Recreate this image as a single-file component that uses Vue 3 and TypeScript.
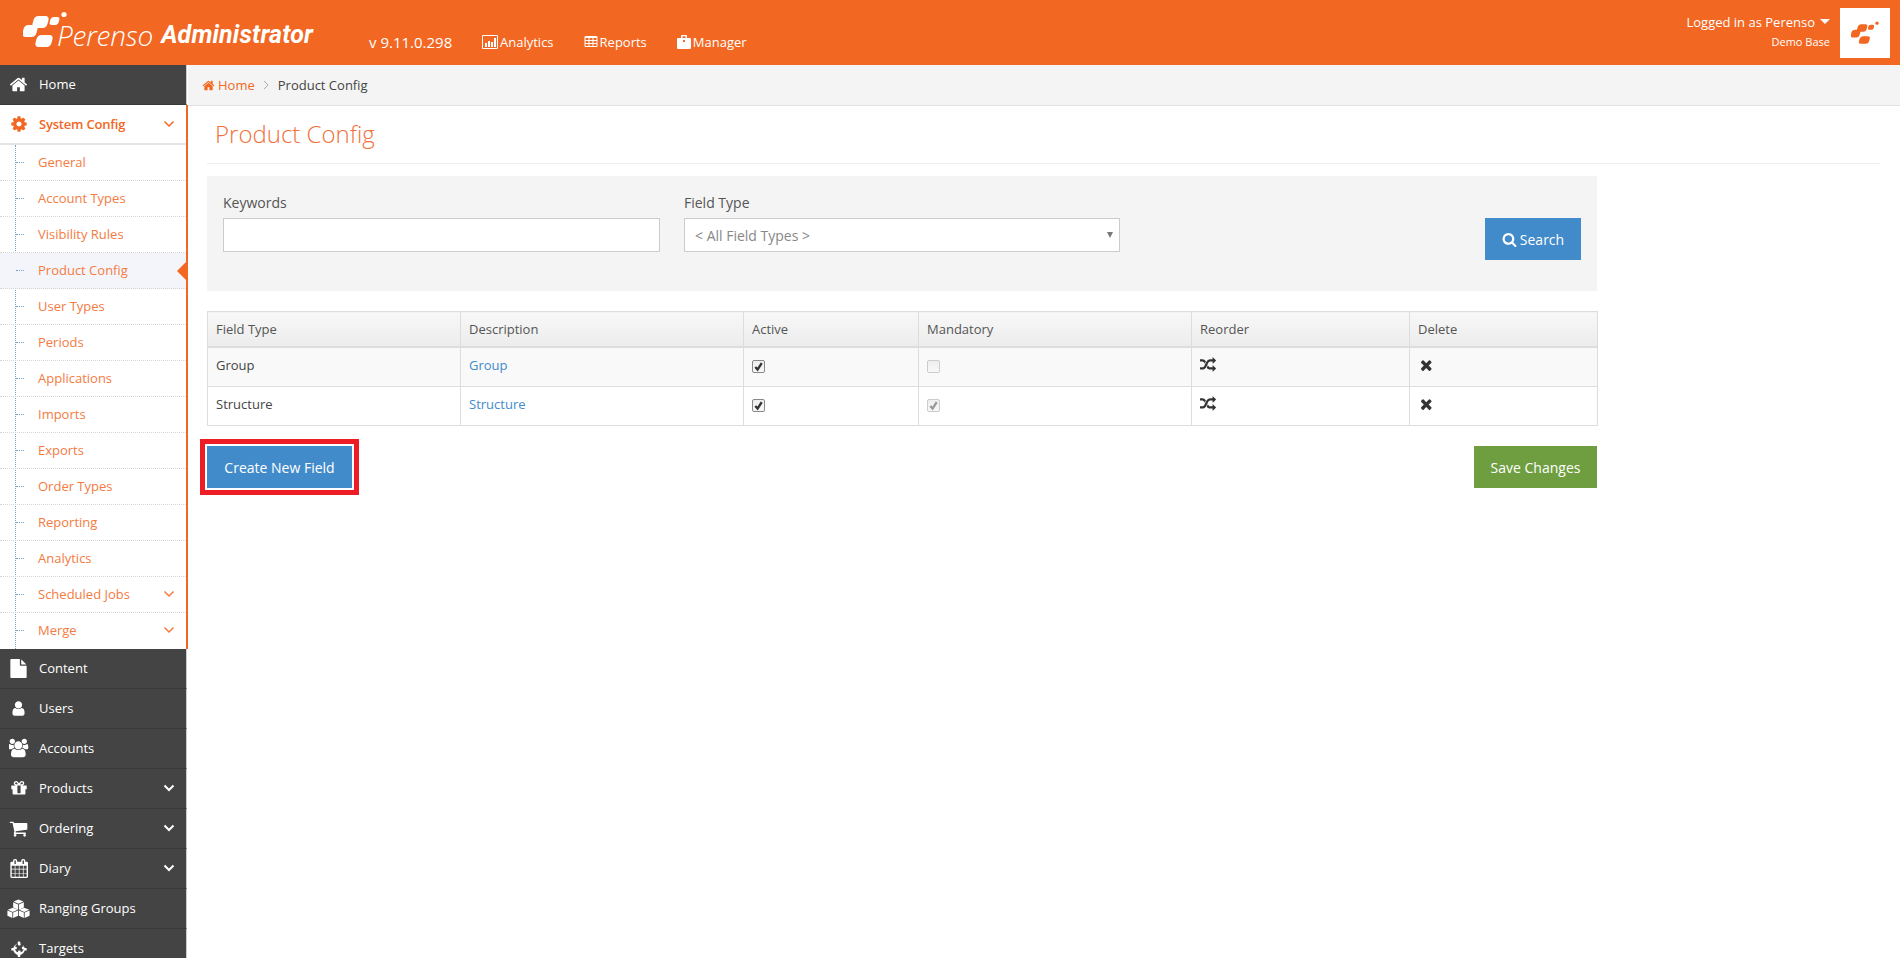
<script setup lang="ts">
interface NavItem {
  label: string
  icon: string
  box: string
  size: number
  arrow?: boolean
}

const icons = {
  home: 'M1472 992v480q0 26-19 45t-45 19h-384v-384h-256v384h-384q-26 0-45-19t-19-45v-480q0-1 .5-3t.5-3l575-474 575 474q1 2 1 6zm223-69l-62 74q-8 9-21 11h-3q-13 0-21-7l-692-577-692 577q-12 8-24 7-13-2-21-11l-62-74q-8-10-7-23.500t11-21.500l719-599q32-26 76-26t76 26l244 204v-195q0-14 9-23t23-9h192q14 0 23 9t9 23v408l219 182q10 8 11 21.500t-7 23.500z',
  cog: 'M1152 896q0-106-75-181t-181-75-181 75-75 181 75 181 181 75 181-75 75-181zm512-109v222q0 12-8 23t-20 13l-185 28q-19 54-39 91 35 50 107 138 10 12 10 25t-9 23q-27 37-99 108t-94 71q-12 0-26-9l-138-108q-44 23-91 38-16 136-29 186-7 28-36 28h-222q-14 0-24.500-8.500t-11.500-21.500l-28-184q-49-16-90-37l-141 107q-10 9-25 9-14 0-25-11-126-114-165-168-7-10-7-23 0-12 8-23 15-21 51-66.500t54-70.500q-27-50-41-99l-183-27q-13-2-21-12.500t-8-23.500v-222q0-12 8-23t19-13l186-28q14-46 39-92-40-57-107-138-10-12-10-24 0-10 9-23 26-36 98.500-107.500t94.500-71.500q13 0 26 10l138 107q44-23 91-38 16-136 29-186 7-28 36-28h222q14 0 24.500 8.500t11.500 21.500l28 184q49 16 90 37l142-107q9-9 24-9 13 0 25 10 129 119 165 170 7 8 7 22 0 12-8 23-15 21-51 66.500t-54 70.500q26 50 41 98l183 28q13 2 21 12.500t8 23.500z',
  file: 'M1596 476q14 14 28 36h-472v-472q22 14 36 28zm-476 164h544v1056q0 40-28 68t-68 28h-1344q-40 0-68-28t-28-68v-1600q0-40 28-68t68-28h800v544q0 40 28 68t68 28z',
  user: 'M1536 1399q0 109-62.500 187t-150.500 78h-854q-88 0-150.500-78t-62.500-187q0-85 8.500-160.500t31.500-152 58.500-131 94-89 134.500-34.500q131 128 313 128t313-128q76 0 134.500 34.500t94 89 58.500 131 31.500 152 8.500 160.500zm-256-887q0 159-112.500 271.500t-271.500 112.500-271.500-112.500-112.500-271.500 112.500-271.500 271.500-112.500 271.500 112.500 112.500 271.500z',
  group: 'M529 896q-162 5-265 128h-134q-82 0-138-40.500t-56-118.500q0-353 124-353 6 0 43.500 21t97.500 42.500 119 21.500q67 0 133-23-5 37-5 66 0 139 81 256zm1071 637q0 120-73 189.500t-194 69.500h-874q-121 0-194-69.500t-73-189.500q0-53 3.500-103.500t14-109 26.500-108.500 43-97.500 62-81 85.500-53.500 111.500-20q10 0 43 21.500t73 48 107 48 135 21.500 135-21.500 107-48 73-48 43-21.500q61 0 111.500 20t85.500 53.500 62 81 43 97.500 26.500 108.500 14 109 3.500 103.500zm-1024-1277q0 106-75 181t-181 75-181-75-75-181 75-181 181-75 181 75 75 181zm704 384q0 159-112.500 271.500t-271.500 112.500-271.500-112.500-112.500-271.500 112.500-271.500 271.500-112.500 271.500 112.500 112.500 271.500zm576 225q0 78-56 118.500t-138 40.500h-134q-103-123-265-128 81-117 81-256 0-29-5-66 66 23 133 23 59 0 119-21.500t97.500-42.500 43.500-21q124 0 124 353zm-128-609q0 106-75 181t-181 75-181-75-75-181 75-181 181-75 181 75 75 181z',
  gift: 'M1056 1356v-716h-320v716q0 25 18 38.500t46 13.500h192q28 0 46-13.500t18-38.500zm-456-844h195l-126-161q-26-31-69-31-40 0-68 28t-28 68 28 68 68 28zm688-96q0-40-28-68t-68-28q-43 0-69 31l-125 161h194q40 0 68-28t28-68zm376 256v320q0 14-9 23t-23 9h-96v416q0 40-28 68t-68 28h-1088q-40 0-68-28t-28-68v-416h-96q-14 0-23-9t-9-23v-320q0-14 9-23t23-9h440q-93 0-158.500-65.500t-65.500-158.500 65.500-158.500 158.500-65.500q107 0 168 77l128 165 128-165q61-77 168-77 93 0 158.500 65.500t65.500 158.500-65.500 158.500-158.500 65.500h440q14 0 23 9t9 23z',
  cart: 'M704 1536q0 52-38 90t-90 38-90-38-38-90 38-90 90-38 90 38 38 90zm896 0q0 52-38 90t-90 38-90-38-38-90 38-90 90-38 90 38 38 90zm128-1088v512q0 24-16.500 42.500t-40.500 21.500l-1044 122q13 60 13 70 0 16-24 64h920q26 0 45 19t19 45-19 45-45 19h-1024q-26 0-45-19t-19-45q0-11 8-31.500t16-36 21.500-40 15.500-29.500l-177-823h-204q-26 0-45-19t-19-45 19-45 45-19h256q16 0 28.500 6.500t19.500 15.500 13 24.500 8 26 5.500 29.500 4.500 26h1201q26 0 45 19t19 45z',
  calendar: 'M192 1664h288v-288h-288v288zm352 0h320v-288h-320v288zm-352-352h288v-320h-288v320zm352 0h320v-320h-320v320zm-352-384h288v-288h-288v288zm736 736h320v-288h-320v288zm-384-736h320v-288h-320v288zm768 736h288v-288h-288v288zm-384-352h320v-320h-320v320zm-352-864v-288q0-13-9.500-22.500t-22.500-9.500h-64q-13 0-22.500 9.500t-9.500 22.500v288q0 13 9.500 22.500t22.500 9.500h64q13 0 22.500-9.500t9.500-22.500zm736 864h288v-320h-288v320zm-384-384h320v-288h-320v288zm384 0h288v-288h-288v288zm32-480v-288q0-13-9.500-22.500t-22.500-9.500h-64q-13 0-22.500 9.500t-9.500 22.500v288q0 13 9.500 22.500t22.500 9.500h64q13 0 22.500-9.500t9.500-22.500zm384-64v1280q0 52-38 90t-90 38h-1408q-52 0-90-38t-38-90v-1280q0-52 38-90t90-38h128v-96q0-66 47-113t113-47h64q66 0 113 47t47 113v96h384v-96q0-66 47-113t113-47h64q66 0 113 47t47 113v96h128q52 0 90 38t38 90z',
  target: 'M1229 1024h-109q-26 0-45-19t-19-45v-128q0-26 19-45t45-19h109q-32-108-112.500-188.500t-188.500-112.500v109q0 26-19 45t-45 19h-128q-26 0-45-19t-19-45v-109q-108 32-188.500 112.500t-112.500 188.500h109q26 0 45 19t19 45v128q0 26-19 45t-45 19h-109q32 108 112.500 188.500t188.500 112.500v-109q0-26 19-45t45-19h128q26 0 45 19t19 45v109q108-32 188.500-112.500t112.500-188.500zm307-64v128q0 26-19 45t-45 19h-143q-37 161-154.500 278.500t-278.500 154.500v143q0 26-19 45t-45 19h-128q-26 0-45-19t-19-45v-143q-161-37-278.500-154.500t-154.500-278.500h-143q-26 0-45-19t-19-45v-128q0-26 19-45t45-19h143q37-161 154.500-278.500t278.500-154.500v-143q0-26 19-45t45-19h128q26 0 45 19t19 45v143q161 37 278.500 154.500t154.500 278.500h143q26 0 45 19t19 45z',
  chart: 'M1 0h14a1 1 0 0 1 1 1v12a1 1 0 0 1-1 1h-14a1 1 0 0 1-1-1v-12a1 1 0 0 1 1-1zM1 1v12h14v-12zM3 8h2v4h-2zM6 6h2v6h-2zM9 7h2v5h-2zM12 3h2v9h-2z',
  table: 'M576 1376v-192q0-14-9-23t-23-9h-320q-14 0-23 9t-9 23v192q0 14 9 23t23 9h320q14 0 23-9t9-23zm0-384v-192q0-14-9-23t-23-9h-320q-14 0-23 9t-9 23v192q0 14 9 23t23 9h320q14 0 23-9t9-23zm512 384v-192q0-14-9-23t-23-9h-320q-14 0-23 9t-9 23v192q0 14 9 23t23 9h320q14 0 23-9t9-23zm-512-768v-192q0-14-9-23t-23-9h-320q-14 0-23 9t-9 23v192q0 14 9 23t23 9h320q14 0 23-9t9-23zm512 384v-192q0-14-9-23t-23-9h-320q-14 0-23 9t-9 23v192q0 14 9 23t23 9h320q14 0 23-9t9-23zm512 384v-192q0-14-9-23t-23-9h-320q-14 0-23 9t-9 23v192q0 14 9 23t23 9h320q14 0 23-9t9-23zm-512-768v-192q0-14-9-23t-23-9h-320q-14 0-23 9t-9 23v192q0 14 9 23t23 9h320q14 0 23-9t9-23zm512 384v-192q0-14-9-23t-23-9h-320q-14 0-23 9t-9 23v192q0 14 9 23t23 9h320q14 0 23-9t9-23zm0-384v-192q0-14-9-23t-23-9h-320q-14 0-23 9t-9 23v192q0 14 9 23t23 9h320q14 0 23-9t9-23zm128-320v1088q0 66-47 113t-113 47h-1344q-66 0-113-47t-47-113v-1088q0-66 47-113t113-47h1344q66 0 113 47t47 113z',
  briefcase: 'M5 0h4a1 1 0 0 1 1 1v2h3a1 1 0 0 1 1 1v9a1 1 0 0 1-1 1h-12a1 1 0 0 1-1-1v-9a1 1 0 0 1 1-1h3v-2a1 1 0 0 1 1-1zM5.500 1.200v1.800h3v-1.800zM6 5h2v2h-2z',
  search: 'M1216 832q0-185-131.500-316.500t-316.500-131.500-316.500 131.500-131.500 316.500 131.500 316.500 316.500 131.500 316.500-131.500 131.500-316.500zm512 832q0 52-38 90t-90 38q-54 0-90-38l-343-342q-179 124-399 124-143 0-273.500-55.500t-225-150-150-225-55.500-273.500 55.500-273.500 150-225 225-150 273.500-55.500 273.500 55.500 225 150 150 225 55.500 273.500q0 220-124 399l343 343q37 37 37 90z',
  shuffle: 'M666 481q-60 92-137 273-22-45-37-72.500t-40.500-63.500-51-56.500-63-35-81.500-14.500h-224q-14 0-23-9t-9-23v-192q0-14 9-23t23-9h224q250 0 410 225zm1126 799q0 14-9 23l-320 320q-9 9-23 9-13 0-22.500-9.500t-9.500-22.500v-192q-32 0-85 .5t-81 1-73-1-71-5-64-10.500-63-18.500-58-28.500-59-40-55-53.500-56-69.500q59-93 136-273 22 45 37 72.500t40.500 63.500 51 56.500 63 35 81.500 14.500h256v-192q0-14 9-23t23-9q12 0 24 10l319 319q9 9 9 23zm0-896q0 14-9 23l-320 320q-9 9-23 9-13 0-22.500-9.500t-9.500-22.500v-192h-256q-48 0-87 15t-69 45-51 61.500-45 77.500q-32 62-78 171-29 66-49.500 111t-54 105-64 100-74 83-90 68.500-106.500 42-128 16.500h-224q-14 0-23-9t-9-23v-192q0-14 9-23t23-9h224q48 0 87-15t69-45 51-61.500 45-77.500q32-62 78-171 29-66 49.500-111t54-105 64-100 74-83 90-68.500 106.500-42 128-16.500h256v-192q0-14 9-23t23-9q12 0 24 10l319 319q9 9 9 23z',
  times: 'M1490 1322q0 40-28 68l-136 136q-28 28-68 28t-68-28l-294-294-294 294q-28 28-68 28t-68-28l-136-136q-28-28-28-68t28-68l294-294-294-294q-28-28-28-68t28-68l136-136q28-28 68-28t68 28l294 294 294-294q28-28 68-28t68 28l136 136q28 28 28 68t-28 68l-294 294 294 294q28 28 28 68z',
}

const cube = (x: number, y: number): string =>
  `M${x} ${y - 6}l6 2.600-6 2.600-6-2.600z` +
  `M${x - 6.500} ${y - 2.600}l6 2.600v6.500l-6-2.800z` +
  `M${x + 6.500} ${y - 2.600}l-6 2.600v6.500l6-2.800z`
const cubes = cube(14, 7) + cube(7, 17) + cube(21, 17)

const box = '0 0 1792 1792'

// the four pieces of the Perenso mark, slanted about their own centre
const slant = 0.27
const markPieces = [
  { x: 10, y: 5, w: 15, h: 12, r: 4 },
  { x: 0, y: 14, w: 14, h: 12, r: 4 },
  { x: 27, y: 6, w: 9, h: 8, r: 3 },
  { x: 13, y: 24, w: 16, h: 12, r: 4 },
].map(p => ({ ...p, transform: `matrix(1 0 ${-slant} 1 ${slant * (p.y + p.h / 2)} 0)` }))

const subItems: { label: string; arrow?: boolean; active?: boolean }[] = [
  { label: 'General' },
  { label: 'Account Types' },
  { label: 'Visibility Rules' },
  { label: 'Product Config', active: true },
  { label: 'User Types' },
  { label: 'Periods' },
  { label: 'Applications' },
  { label: 'Imports' },
  { label: 'Exports' },
  { label: 'Order Types' },
  { label: 'Reporting' },
  { label: 'Analytics' },
  { label: 'Scheduled Jobs', arrow: true },
  { label: 'Merge', arrow: true },
]

const lowerItems: NavItem[] = [
  { label: 'Content', icon: icons.file, box, size: 19 },
  { label: 'Users', icon: icons.user, box, size: 17 },
  { label: 'Accounts', icon: icons.group, box: '0 0 1920 1792', size: 20 },
  { label: 'Products', icon: icons.gift, box, size: 18, arrow: true },
  { label: 'Ordering', icon: icons.cart, box: '0 0 1792 1792', size: 19, arrow: true },
  { label: 'Diary', icon: icons.calendar, box: '0 0 1664 1792', size: 19, arrow: true },
  { label: 'Ranging Groups', icon: cubes, box: '0 0 28 24', size: 23 },
  { label: 'Targets', icon: icons.target, box: '0 0 1536 1792', size: 18 },
]

const topLinks = [
  { label: 'Analytics', icon: icons.chart, box: '0 0 16 14', width: 16 },
  { label: 'Reports', icon: icons.table, box, width: 14 },
  { label: 'Manager', icon: icons.briefcase, box: '0 0 14 14', width: 14 },
]

const columns = [
  { label: 'Field Type', width: 253 },
  { label: 'Description', width: 283 },
  { label: 'Active', width: 175 },
  { label: 'Mandatory', width: 273 },
  { label: 'Reorder', width: 218 },
  { label: 'Delete', width: 188 },
]

const rows = [
  { type: 'Group', mandatory: false },
  { type: 'Structure', mandatory: true },
]
</script>

<template>
  <div class="page">
    <header class="top">
      <div class="brand">
        <svg class="mark" viewBox="0 0 44 38" fill="currentColor">
          <rect v-for="(p, i) in markPieces" :key="i" :x="p.x" :y="p.y" :width="p.w" :height="p.h" :rx="p.r" :transform="p.transform" />
          <circle cx="41" cy="3.500" r="2.600" />
        </svg>
        <span class="perenso">Perenso</span>
        <span class="admin">Administrator</span>
      </div>
      <span class="version">v 9.11.0.298</span>
      <nav class="top-links">
        <a v-for="link in topLinks" :key="link.label" class="top-link">
          <svg :viewBox="link.box" :width="link.width" height="14" fill="currentColor" fill-rule="evenodd"><path :d="link.icon" /></svg>
          {{ link.label }}
        </a>
      </nav>
      <div class="account">
        <div class="who">
          <div class="logged">Logged in as Perenso<i class="caret"></i></div>
          <div class="base">Demo Base</div>
        </div>
        <div class="avatar">
          <svg viewBox="0 0 44 38" fill="#f26722">
            <rect v-for="(p, i) in markPieces" :key="i" :x="p.x" :y="p.y" :width="p.w" :height="p.h" :rx="p.r" :transform="p.transform" />
            <circle cx="41" cy="3.500" r="2.600" />
          </svg>
        </div>
      </div>
    </header>

    <div class="body">
      <aside class="side">
        <a class="dark-item">
          <span class="icon-cell"><svg :viewBox="box" width="19" height="19" fill="currentColor"><path :d="icons.home" /></svg></span>
          Home
        </a>
        <div class="open-group">
          <a class="open-head">
            <span class="icon-cell"><svg :viewBox="box" width="18" height="18" fill="currentColor"><path :d="icons.cog" /></svg></span>
            System Config
            <svg class="chev" viewBox="0 0 12 8"><polyline points="1.500,1.500 6,6 10.500,1.500" /></svg>
          </a>
          <ul class="subs">
            <li v-for="item in subItems" :key="item.label" class="sub" :class="{ active: item.active }">
              {{ item.label }}
              <svg v-if="item.arrow" class="chev" viewBox="0 0 12 8"><polyline points="1.500,1.500 6,6 10.500,1.500" /></svg>
            </li>
          </ul>
        </div>
        <a v-for="item in lowerItems" :key="item.label" class="dark-item">
          <span class="icon-cell">
            <svg :viewBox="item.box" :width="item.size" :height="item.size" fill="currentColor"><path :d="item.icon" /></svg>
          </span>
          {{ item.label }}
          <svg v-if="item.arrow" class="chev" viewBox="0 0 12 8"><polyline points="1.500,1.500 6,6 10.500,1.500" /></svg>
        </a>
      </aside>

      <main class="main">
        <div class="crumbs">
          <svg class="crumb-home" :viewBox="box" fill="currentColor"><path :d="icons.home" /></svg>
          <a class="crumb-link">Home</a>
          <svg class="crumb-sep" viewBox="0 0 6 10"><polyline points="1,1 5,5 1,9" /></svg>
          <span>Product Config</span>
        </div>

        <div class="content">
          <h1 class="title">Product Config</h1>

          <section class="filters">
            <div class="field">
              <label class="field-label">Keywords</label>
              <input class="control" type="text" />
            </div>
            <div class="field">
              <label class="field-label">Field Type</label>
              <div class="select-wrap">
                <select class="control select">
                  <option>&lt; All Field Types &gt;</option>
                </select>
              </div>
            </div>
            <button class="btn search-btn">
              <svg class="search-icon" :viewBox="box" fill="currentColor"><path :d="icons.search" /></svg>
              Search
            </button>
          </section>

          <table class="grid">
            <colgroup>
              <col v-for="col in columns" :key="col.label" :style="{ width: col.width + 'px' }" />
            </colgroup>
            <thead>
              <tr><th v-for="col in columns" :key="col.label">{{ col.label }}</th></tr>
            </thead>
            <tbody>
              <tr v-for="row in rows" :key="row.type">
                <td>{{ row.type }}</td>
                <td><a class="link">{{ row.type }}</a></td>
                <td>
                  <span class="check on">
                    <svg viewBox="0 0 12 12"><path d="M2.500 6.500l2.500 2.800 4.500-7" /></svg>
                  </span>
                </td>
                <td>
                  <span class="check off">
                    <svg v-if="row.mandatory" viewBox="0 0 12 12"><path d="M2.500 6.500l2.500 2.800 4.500-7" /></svg>
                  </span>
                </td>
                <td><svg class="cell-icon" :viewBox="box" fill="currentColor"><path :d="icons.shuffle" /></svg></td>
                <td><svg class="cell-icon" viewBox="0 0 1536 1792" fill="currentColor"><path :d="icons.times" transform="translate(-100 0)" /></svg></td>
              </tr>
            </tbody>
          </table>

          <div class="actions">
            <button class="btn create-btn">Create New Field</button>
            <button class="btn save-btn">Save Changes</button>
          </div>
        </div>
      </main>
    </div>
  </div>
</template>

<style>
html,
body {
  margin: 0;
  overflow: hidden;
  background: #fff;
}
</style>

<style scoped>
.page {
  height: 958px;
  display: flex;
  flex-direction: column;
  overflow: hidden;
  font-family: "Open Sans", "Liberation Sans", sans-serif;
  font-size: 13px;
  color: #333;
}

.top {
  flex: none;
  height: 65px;
  background: #f26722;
  color: #fff;
  display: flex;
  align-items: center;
  padding-right: 10px;
}

.brand {
  width: 369px;
  height: 65px;
  padding: 11px 0 0 23px;
  box-sizing: border-box;
  display: flex;
  align-items: flex-start;
}

.mark {
  width: 44px;
  height: 38px;
  flex: none;
}

.perenso {
  font-weight: 300;
  font-style: italic;
  font-size: 28px;
  line-height: 38px;
  letter-spacing: -0.200px;
  margin: 5px 8px 0 -10px;
}

.admin {
  font-family: "Roboto", sans-serif;
  font-weight: 700;
  font-style: italic;
  font-size: 25px;
  line-height: 38px;
  letter-spacing: 0.150px;
  margin-top: 5px;
}

.version {
  font-size: 15px;
  padding-top: 19px;
  width: 113px;
}

.top-links {
  display: flex;
  gap: 30px;
  padding-top: 19px;
}

.top-link {
  display: flex;
  align-items: center;
  gap: 2px;
}

.account {
  margin-left: auto;
  display: flex;
  align-items: center;
  gap: 10px;
}

.who {
  text-align: right;
  margin-top: -2px;
}

.logged {
  line-height: 18px;
  margin-bottom: 3px;
}

.caret {
  display: inline-block;
  margin: 0 0 3px 5px;
  border-left: 5px solid transparent;
  border-right: 5px solid transparent;
  border-top: 5px solid #fff;
}

.base {
  font-size: 11px;
  line-height: 16px;
}

.avatar {
  width: 50px;
  height: 50px;
  background: #fff;
  display: flex;
  align-items: center;
  justify-content: center;
}

.avatar svg {
  width: 28px;
  height: 24px;
}

.body {
  flex: 1;
  display: flex;
  min-height: 0;
}

.side {
  flex: none;
  width: 188px;
  overflow: hidden;
}

.icon-cell {
  width: 39px;
  flex: none;
  display: flex;
  justify-content: center;
  padding-right: 2px;
  box-sizing: border-box;
}

.dark-item {
  width: 187px;
  height: 40px;
  box-sizing: border-box;
  padding-bottom: 1px;
  display: flex;
  align-items: center;
  color: #fff;
  background: #444;
  border-right: 1px solid #ccc;
  border-bottom: 1px solid #393939;
}

.chev {
  width: 12px;
  height: 8px;
  margin-left: auto;
  margin-right: 11px;
  fill: none;
  stroke: currentColor;
  stroke-width: 1.500;
}

.dark-item .chev {
  stroke-width: 2;
}

.open-group {
  background: #fff;
  border-right: 2px solid #f26722;
  color: #f26722;
}

.open-head {
  height: 40px;
  box-sizing: border-box;
  display: flex;
  align-items: center;
  font-weight: 600;
  letter-spacing: -0.200px;
  border-bottom: 2px solid #e4e4e4;
}

.subs {
  list-style: none;
  margin: 0;
  padding: 0;
  position: relative;
}

.subs::before {
  content: "";
  position: absolute;
  left: 15px;
  top: 0;
  bottom: 0;
  border-left: 1px dotted #6fa3cf;
}

.sub {
  height: 36px;
  box-sizing: border-box;
  display: flex;
  align-items: center;
  padding: 0 0 2px 38px;
  border-bottom: 1px dotted #d6d6d6;
  position: relative;
  color: #f47b3f;
}

.sub:last-child {
  border-bottom: none;
}

.sub::before {
  content: "";
  position: absolute;
  left: 16px;
  top: 17px;
  width: 8px;
  border-top: 1px dotted #6fa3cf;
}

.sub.active {
  background: #f4f5fa;
}

.sub.active::after {
  content: "";
  position: absolute;
  right: 0;
  top: 9px;
  border-top: 9px solid transparent;
  border-bottom: 9px solid transparent;
  border-right: 9px solid #f26722;
}

.main {
  flex: 1;
  min-width: 0;
}

.crumbs {
  height: 41px;
  box-sizing: border-box;
  padding-left: 14px;
  background: #f4f4f4;
  border-bottom: 1px solid #e2e2e2;
  display: flex;
  align-items: center;
  color: #444;
}

.crumb-home {
  width: 13px;
  height: 13px;
  color: #f26722;
  margin-right: 3px;
}

.crumb-link {
  color: #f26722;
}

.crumb-sep {
  width: 6px;
  height: 10px;
  margin: 0 9px 0 8px;
  fill: none;
  stroke: #aaa;
}

.content {
  padding: 0 20px 0 19px;
}

.title {
  margin: 0 0 12px;
  height: 58px;
  box-sizing: border-box;
  padding: 11px 0 0 8px;
  border-bottom: 1px solid #eee;
  font-size: 24px;
  font-weight: 300;
  line-height: 34px;
  color: #f2703a;
}

.filters {
  width: 1390px;
  height: 115px;
  box-sizing: border-box;
  padding: 17px 16px 0;
  background: #f4f4f4;
  display: flex;
  gap: 24px;
}

.field {
  width: 437px;
}

.field + .field {
  width: 436px;
}

.field-label {
  display: block;
  font-size: 14px;
  line-height: 20px;
  margin-bottom: 5px;
  color: #555;
}

.control {
  display: block;
  width: 100%;
  height: 34px;
  box-sizing: border-box;
  border: 1px solid #ccc;
  background: #fff;
  border-radius: 0;
  font-family: inherit;
  font-size: 14px;
  color: #888;
  padding: 0 10px;
  outline: none;
}

.select-wrap {
  position: relative;
}

.select-wrap::after {
  content: "";
  position: absolute;
  right: 7px;
  top: 14px;
  border-left: 3px solid transparent;
  border-right: 3px solid transparent;
  border-top: 6px solid #777;
}

.select {
  appearance: none;
}

.btn {
  border: none;
  border-radius: 0;
  height: 42px;
  color: #fff;
  font-family: inherit;
  font-size: 14px;
  padding: 0;
}

.search-btn {
  margin: 25px 0 0 auto;
  width: 96px;
  background: #428bca;
  display: flex;
  align-items: center;
  justify-content: center;
  gap: 3px;
}

.search-icon {
  width: 15px;
  height: 15px;
}

.grid {
  margin-top: 20px;
  width: 1390px;
  table-layout: fixed;
  border-collapse: collapse;
}

.grid th,
.grid td {
  border: 1px solid #ddd;
  padding: 0 8px;
  text-align: left;
}

.grid th {
  height: 34px;
  font-weight: 400;
  color: #555;
  background: linear-gradient(#f8f8f8, #ececec);
  border-bottom: 2px solid #ddd;
}

.grid td {
  height: 34px;
  padding-bottom: 4px;
  color: #444;
}

.grid tbody tr:nth-child(odd) td {
  background: #f9f9f9;
}

.link {
  color: #428bca;
}

.check {
  display: inline-block;
  vertical-align: middle;
  width: 13px;
  height: 13px;
  border-radius: 2px;
  box-sizing: border-box;
  border: 1px solid #888;
  background: linear-gradient(#eee, #f8f8f8);
}

.check svg {
  display: block;
  width: 11px;
  height: 11px;
  fill: none;
  stroke: #333;
  stroke-width: 2.600;
}

.check.off {
  border-color: #ccc;
}

.check.off svg {
  stroke: #999;
}

.cell-icon {
  display: block;
  width: 16px;
  height: 16px;
  color: #333;
}

.actions {
  width: 1390px;
  margin-top: 20px;
  display: flex;
  justify-content: space-between;
}

.create-btn {
  width: 145px;
  background: #428bca;
  outline: 5px solid #ee1c25;
  outline-offset: 2px;
}

.save-btn {
  width: 123px;
  background: #6f9e40;
}
</style>
